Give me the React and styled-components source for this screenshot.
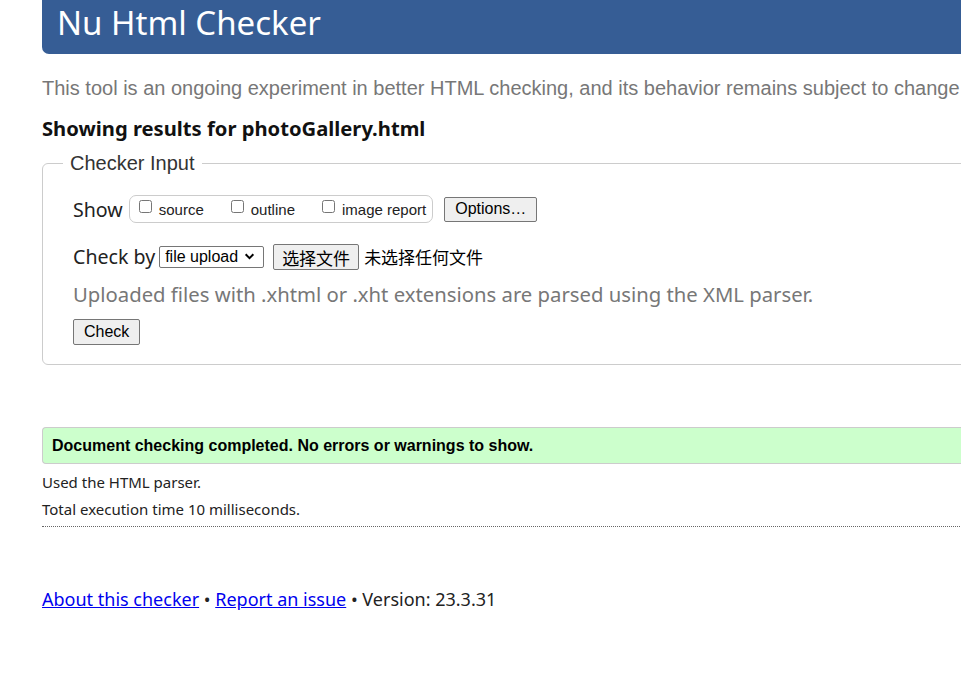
import React from "react";
import styled, { createGlobalStyle } from "styled-components";

const GlobalStyle = createGlobalStyle`
  html, body {
    margin: 0;
    padding: 0;
    background: #fff;
    overflow: hidden;
  }
  body {
    font-family: "Noto Sans", "Noto Sans CJK SC", sans-serif;
    color: #222;
  }
`;

const Page = styled.div`
  width: 1200px;
  padding-left: 42px;
  box-sizing: border-box;
`;

const Header = styled.h1`
  margin: 0;
  height: 54px;
  background: #365d95;
  color: #fff;
  border-bottom-left-radius: 7px;
  padding-left: 15px;
  font-family: "Noto Sans", sans-serif;
  font-weight: 400;
  font-size: 33px;
  line-height: 46px;
`;

const Intro = styled.p`
  margin: 22px 0 0;
  font-family: "Liberation Sans", Arial, sans-serif;
  font-size: 20px;
  line-height: 24px;
  color: #777;
`;

const Results = styled.h2`
  margin: 15px 0 0;
  font-family: "Noto Sans", sans-serif;
  font-weight: 700;
  font-size: 20.2px;
  line-height: 26px;
  color: #111;
`;

const Fieldset = styled.fieldset`
  margin: 11px 0 0;
  padding: 20px 30px 19px;
  border: 1px solid #ccc;
  border-radius: 6px;
  min-inline-size: auto;
`;

const Legend = styled.legend`
  margin-left: -10px;
  padding: 0 7px;
  font-family: "Liberation Sans", Arial, sans-serif;
  font-size: 20px;
  color: #333;
`;

const Row = styled.div`
  display: flex;
  align-items: center;
  margin-bottom: ${(p) => p.$gap || 0}px;
`;

const Label = styled.span`
  font-family: "Noto Sans", sans-serif;
  font-size: 19.6px;
  color: #222;
  margin-right: 4px;
`;

const OptionBox = styled.div`
  display: flex;
  align-items: center;
  height: 26px;
  margin-left: 2px;
  border: 1px solid #ccc;
  border-radius: 7px;
  padding: 0 6px 0 8px;
  gap: 26px;
`;

const CheckItem = styled.label`
  display: flex;
  align-items: center;
  font-family: "Liberation Sans", Arial, sans-serif;
  font-size: 15px;
  color: #222;
  input {
    margin: 0 7px 0 1px;
    width: 13px;
    height: 13px;
    position: relative;
    top: -3px;
  }
`;

const Button = styled.button`
  font-family: "Liberation Sans", Arial, "Noto Sans CJK SC", sans-serif;
  font-size: ${(p) => p.$fs || 16}px;
  color: #000;
  background: #efefef;
  border: 1px solid #767676;
  border-radius: 2px;
  height: ${(p) => p.$h || 25}px;
  padding: 0 ${(p) => p.$px || 9}px;
  margin-left: ${(p) => p.$ml || 0}px;
`;

const Select = styled.div`
  display: flex;
  align-items: center;
  gap: 6px;
  height: 20px;
  border: 1px solid #767676;
  border-radius: 2px;
  padding: 0 8px 0 5px;
  font-family: "Liberation Sans", Arial, sans-serif;
  font-size: 16px;
  color: #000;
  svg {
    width: 11px;
    height: 11px;
  }
`;

const NoFile = styled.span`
  margin-left: 5px;
  font-family: "Noto Sans CJK SC", sans-serif;
  font-size: 17px;
  color: #000;
`;

const Note = styled.p`
  margin: 0 0 12px;
  font-family: "Noto Sans", sans-serif;
  font-size: 20.3px;
  line-height: 26px;
  color: #777;
`;

const Success = styled.div`
  margin-top: 62px;
  background: #ccffcc;
  border: 1px solid #ccc;
  border-right: none;
  border-radius: 4px 0 0 4px;
  height: 35px;
  display: flex;
  align-items: center;
  padding-left: 9px;
  font-family: "Liberation Sans", Arial, sans-serif;
  font-weight: 700;
  font-size: 16px;
  color: #000;
`;

const Detail = styled.p`
  margin: 0;
  font-family: "Noto Sans", sans-serif;
  font-size: 15px;
  line-height: 27px;
  color: #222;
`;

const Details = styled.div`
  padding-top: 5px;
  padding-bottom: 3px;
  border-bottom: 1px dotted #666;
`;

const Footer = styled.p`
  margin: 60px 0 0;
  font-family: "Noto Sans", sans-serif;
  font-size: 18px;
  color: #222;
  a {
    color: #0000ee;
    text-decoration: underline;
  }
`;

export default function App() {
  return (
    <Page>
      <GlobalStyle />
      <Header>Nu Html Checker</Header>
      <Intro>
        This tool is an ongoing experiment in better HTML checking, and its
        behavior remains subject to change
      </Intro>
      <Results>Showing results for photoGallery.html</Results>
      <Fieldset>
        <Legend>Checker Input</Legend>
        <Row $gap={20}>
          <Label>Show</Label>
          <OptionBox>
            <CheckItem>
              <input type="checkbox" />
              source
            </CheckItem>
            <CheckItem>
              <input type="checkbox" />
              outline
            </CheckItem>
            <CheckItem>
              <input type="checkbox" />
              image report
            </CheckItem>
          </OptionBox>
          <Button $ml={11} $px={10}>Options…</Button>
        </Row>
        <Row $gap={11}>
          <Label>Check by</Label>
          <Select>
            file upload
            <svg viewBox="0 0 10 10">
              <path d="M1.5 3 L5 6.5 L8.5 3" fill="none" stroke="#000" strokeWidth="1.8" />
            </svg>
          </Select>
          <Button $ml={9} $h={26} $px={8} $fs={17}>选择文件</Button>
          <NoFile>未选择任何文件</NoFile>
        </Row>
        <Note>
          Uploaded files with .xhtml or .xht extensions are parsed using the XML
          parser.
        </Note>
        <Button $h={26} $px={10}>Check</Button>
      </Fieldset>
      <Success>Document checking completed. No errors or warnings to show.</Success>
      <Details>
        <Detail>Used the HTML parser.</Detail>
        <Detail>Total execution time 10 milliseconds.</Detail>
      </Details>
      <Footer>
        <a href="#about">About this checker</a> •{" "}
        <a href="#issue">Report an issue</a> • Version: 23.3.31
      </Footer>
    </Page>
  );
}
